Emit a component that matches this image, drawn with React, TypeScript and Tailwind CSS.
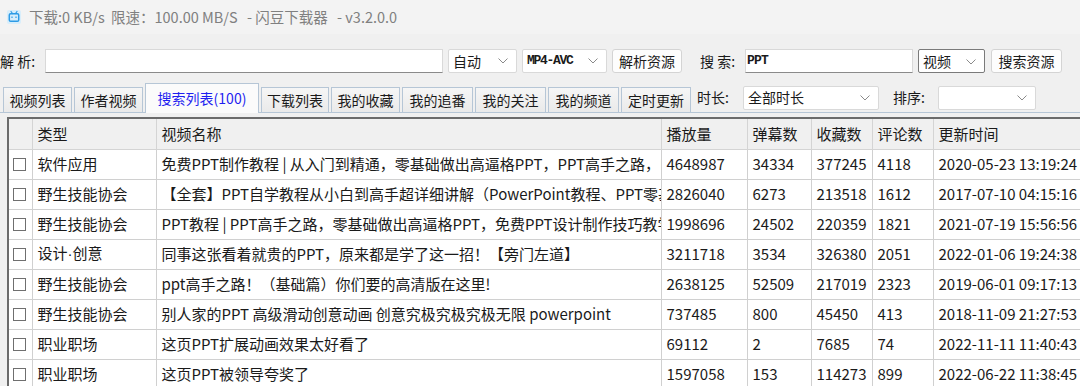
import React from 'react';

const FONT = { fontFamily: '"Noto Sans CJK SC", "Microsoft YaHei", sans-serif' };
const MONO = { fontFamily: '"Liberation Mono", "Noto Sans CJK SC", monospace' };

type Row = [React.ReactNode, string, string, string, string, string, string];

const rows: Row[] = [
  ['软件应用', '免费PPT制作教程 | 从入门到精通，零基础做出高逼格PPT，PPT高手之路，PPT设计制作技巧', '4648987', '34334', '377245', '4118', '2020-05-23 13:19:24'],
  ['野生技能协会', '【全套】PPT自学教程从小白到高手超详细讲解（PowerPoint教程、PPT零基础入门）', '2826040', '6273', '213518', '1612', '2017-07-10 04:15:16'],
  ['野生技能协会', 'PPT教程 | PPT高手之路，零基础做出高逼格PPT，免费PPT设计制作技巧教学', '1998696', '24502', '220359', '1821', '2021-07-19 15:56:56'],
  [<>设计<span style={{ fontFamily: '"Liberation Sans", sans-serif' }}>·</span>创意</>, '同事这张看着就贵的PPT，原来都是学了这一招！【旁门左道】', '3211718', '3534', '326380', '2051', '2022-01-06 19:24:38'],
  ['野生技能协会', 'ppt高手之路！（基础篇）你们要的高清版在这里!', '2638125', '52509', '217019', '2323', '2019-06-01 09:17:13'],
  ['野生技能协会', '别人家的PPT 高级滑动创意动画 创意究极究极究极无限 powerpoint', '737485', '800', '45450', '413', '2018-11-09 21:27:53'],
  ['职业职场', '这页PPT扩展动画效果太好看了', '69112', '2', '7685', '74', '2022-11-11 11:40:43'],
  ['职业职场', '这页PPT被领导夸奖了', '1597058', '153', '114273', '899', '2022-06-22 11:38:45'],
];

// tab label + pixel width, measured off the window
const tabs: [string, string][] = [
  ['视频列表', 'w-[69px]'],
  ['作者视频', 'w-[69px]'],
  ['搜索列表(100)', 'w-[114px]'],
  ['下载列表', 'w-[68px]'],
  ['我的收藏', 'w-[69px]'],
  ['我的追番', 'w-[71px]'],
  ['我的关注', 'w-[71px]'],
  ['我的频道', 'w-[71px]'],
  ['定时更新', 'w-[70px]'],
];

function Chevron() {
  return (
    <svg width="10" height="6" viewBox="0 0 10 6" className="shrink-0">
      <polyline points="0.5,0.5 5,5 9.5,0.5" fill="none" stroke="#8a8a8a" strokeWidth="1" />
    </svg>
  );
}

function Select({ w, label, mono, dark }: { w: string; label: string; mono?: boolean; dark?: boolean }) {
  return (
    <div
      className={`${w} h-[24px] flex items-center justify-between pl-[4px] pr-[8px] bg-white border ${dark ? 'border-[#7a7a7a] items-start pt-[1px]' : 'border-[#d9d9d9]'} rounded-[2px] text-[14px] text-[#1a1a1a]`}
    >
      {mono ? (
        <span className="text-[13px] tracking-[-1.3px] font-bold" style={MONO}>{label}</span>
      ) : (
        <span>{label}</span>
      )}
      <span className="self-center"><Chevron /></span>
    </div>
  );
}

function Button({ w, label }: { w: string; label: string }) {
  return (
    <div className={`${w} h-[24px] flex items-center justify-center bg-[#fdfdfd] border border-[#d4d4d4] rounded-[3px] text-[14px] text-[#1a1a1a]`}>
      {label}
    </div>
  );
}

function Logo() {
  return (
    <svg width="14" height="14" viewBox="0 0 14 14">
      <rect x="0" y="0" width="14" height="14" rx="2" fill="#d8eefb" />
      <line x1="4" y1="1.5" x2="5.5" y2="3.5" stroke="#2d9be6" strokeWidth="1.2" strokeLinecap="round" />
      <line x1="10" y1="1.5" x2="8.5" y2="3.5" stroke="#2d9be6" strokeWidth="1.2" strokeLinecap="round" />
      <rect x="2.3" y="3.8" width="9.4" height="7.4" rx="1.3" fill="none" stroke="#2d9be6" strokeWidth="1.5" />
      <line x1="5" y1="6.5" x2="5" y2="8" stroke="#2d9be6" strokeWidth="1.2" />
      <line x1="9" y1="6.5" x2="9" y2="8" stroke="#2d9be6" strokeWidth="1.2" />
    </svg>
  );
}

export default function App() {
  return (
    <div className="w-[1080px] h-[386px] overflow-hidden bg-[#f0f0f0] text-[#1a1a1a]" style={FONT}>
      {/* title bar */}
      <div className="h-[34px] flex items-center pl-[7px] bg-[#f3f3f3] text-[14.5px] text-[#808080] whitespace-pre">
        <Logo />
        <span className="ml-[8px] w-[82px]">下载:0 KB/s</span>
        <span className="w-[136px]">限速：100.00 MB/S</span>
        <span className="w-[90px]">- 闪豆下载器</span>
        <span>- v3.2.0.0</span>
      </div>

      {/* parse / search row */}
      <div className="mt-[15px] h-[24px] flex items-center text-[14px]">
        <div className="w-[45px] whitespace-pre">解 析:</div>
        <div className="w-[398px] h-[24px] bg-white border border-[#d9d9d9] border-b-[#8a8a8a]" />
        <div className="ml-[5px]"><Select w="w-[69px]" label="自动" /></div>
        <div className="ml-[5px]"><Select w="w-[85px]" label="MP4-AVC" mono /></div>
        <div className="ml-[5px]"><Button w="w-[70px]" label="解析资源" /></div>
        <div className="ml-[18px] w-[45px] whitespace-pre">搜 索:</div>
        <div className="w-[168px] h-[24px] bg-white border border-[#d9d9d9] border-b-[#8a8a8a] flex items-center pl-[1px] text-[13px] font-bold tracking-[-0.8px]" style={MONO}>PPT</div>
        <div className="ml-[5px]"><Select w="w-[67px]" label="视频" dark /></div>
        <div className="ml-[6px]"><Button w="w-[71px]" label="搜索资源" /></div>
      </div>

      {/* tabs row */}
      <div className="mt-[10px] h-[30px] flex items-end border-b border-[#b6c6d6]">
        <div className="pl-[3px] flex items-end gap-[2px]">
          {tabs.map(([t, w], i) =>
            i === 2 ? (
              <div key={t} className={`${w} h-[30px] -mb-px flex items-center justify-center bg-[#fbfbfb] border border-b-0 border-[#b6c6d6] text-[14px] text-[#1f1ff0]`}>
                {t}
              </div>
            ) : (
              <div key={t} className={`${w} h-[25px] flex items-center justify-center bg-gradient-to-b from-[#f6f6f6] to-[#eaeaea] border border-b-0 border-[#b6c6d6] text-[14px]`}>
                {t}
              </div>
            )
          )}
        </div>
        <div className="self-center flex items-center text-[14px]">
          <div className="ml-[6px] w-[46px]">时长:</div>
          <Select w="w-[136px]" label="全部时长" />
          <div className="ml-[14px] w-[45px]">排序:</div>
          <Select w="w-[98px]" label="" />
        </div>
      </div>

      {/* table */}
      <div className="mt-[4px] ml-[7px] border-t-2 border-l-2 border-[#6b6b6b] bg-white">
        <table className="table-fixed border-collapse text-[15px] w-[1160px]">
          <colgroup>
            <col className="w-[23px]" />
            <col className="w-[124px]" />
            <col className="w-[505px]" />
            <col className="w-[86px]" />
            <col className="w-[64px]" />
            <col className="w-[61px]" />
            <col className="w-[61px]" />
            <col className="w-[236px]" />
          </colgroup>
          <thead>
            <tr className="h-[30px] bg-[#f0f0f0]">
              {['', '类型', '视频名称', '播放量', '弹幕数', '收藏数', '评论数', '更新时间'].map((h, i) => (
                <th key={i} className="border-r border-b border-[#d4d4d4] text-left font-normal pl-[5px] whitespace-nowrap overflow-hidden">{h}</th>
              ))}
            </tr>
          </thead>
          <tbody>
            {rows.map((r, ri) => (
              <tr key={ri} className="h-[30px]">
                <td className="border-r border-b border-[#d0d0d0] pl-[4px]">
                  <div className="w-[13px] h-[13px] border border-[#6f6f6f] bg-white" />
                </td>
                {r.map((c, ci) => (
                  <td key={ci} className="border-r border-b border-[#d0d0d0] pl-[5px] whitespace-nowrap overflow-hidden">{c}</td>
                ))}
              </tr>
            ))}
          </tbody>
        </table>
      </div>
    </div>
  );
}
